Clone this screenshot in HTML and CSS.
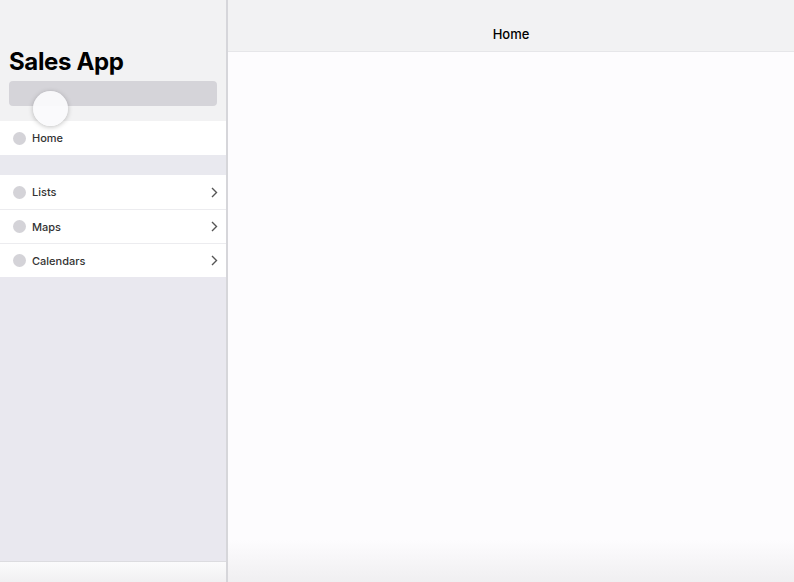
FILE: index.html
```html
<!DOCTYPE html>
<html lang="en">
<head>
  <meta charset="UTF-8">
  <meta name="viewport" content="width=device-width, initial-scale=1.0">
  <title>Sales App</title>
  <link rel="stylesheet" href="styles.css">
</head>
<body>
  <aside class="sidebar">
    <div class="side-head">
      <h1>Sales App</h1>
      <div class="search"></div>
      <div class="touch"></div>
    </div>

    <div class="row"><span class="dot"></span><span class="label">Home</span></div>

    <div class="spacer"></div>

    <div class="group">
      <div class="row"><span class="dot"></span><span class="label">Lists</span>
        <svg class="chev" width="7" height="11" viewBox="0 0 7 11"><path d="M1 1l4.5 4.5L1 10" fill="none" stroke="#555" stroke-width="1.4"/></svg></div>
      <div class="row"><span class="dot"></span><span class="label">Maps</span>
        <svg class="chev" width="7" height="11" viewBox="0 0 7 11"><path d="M1 1l4.5 4.5L1 10" fill="none" stroke="#555" stroke-width="1.4"/></svg></div>
      <div class="row"><span class="dot"></span><span class="label">Calendars</span>
        <svg class="chev" width="7" height="11" viewBox="0 0 7 11"><path d="M1 1l4.5 4.5L1 10" fill="none" stroke="#555" stroke-width="1.4"/></svg></div>
    </div>

    <div class="fill"></div>
    <div class="side-foot"></div>
  </aside>

  <main class="main">
    <header class="main-head">Home</header>
    <div class="main-body"></div>
    <div class="main-foot"></div>
  </main>
</body>
</html>
```

FILE: styles.css
```css
* {
  box-sizing: border-box;
}

body {
  margin: 0;
  height: 582px;
  display: flex;
  font-family: Inter, "Liberation Sans", sans-serif;
  color: #333;
  overflow: hidden;
}

/* Barra lateral */
.sidebar {
  width: 228px;
  display: flex;
  flex-direction: column;
  background-color: #e9e8ef;
  border-right: 2px solid #d6d6da;
}

.side-head {
  position: relative;
  background-color: #f2f2f3;
  padding: 48px 9px 15px;
}

.side-head h1 {
  margin: 0;
  font-size: 24px;
  line-height: 27px;
  font-weight: 700;
  color: #000;
  letter-spacing: -0.35px;
}

.search {
  margin-top: 6px;
  height: 25px;
  border-radius: 4px;
  background-color: #d5d4d9;
}

.touch {
  position: absolute;
  left: 33px;
  top: 91px;
  width: 35px;
  height: 35px;
  border-radius: 50%;
  background-color: rgba(250, 250, 252, 0.95);
  box-shadow: 0 1px 5px rgba(0, 0, 0, 0.25);
}

.row {
  height: 34px;
  display: flex;
  align-items: center;
  padding: 0 8px 0 13px;
  background-color: #fff;
  font-size: 11px;
  font-weight: 500;
}

.group .row + .row {
  border-top: 1px solid #ececef;
}

.dot {
  width: 13px;
  height: 13px;
  border-radius: 50%;
  background-color: #d4d3d8;
  margin-right: 6px;
}

.label {
  flex: 1;
}

.chev {
  display: block;
}

.spacer {
  height: 20px;
  background-color: #e9e9ef;
}

.fill {
  flex: 1;
}

.side-foot {
  height: 21px;
  border-top: 1px solid #dcdce0;
  background: linear-gradient(#fbfbfc, #f1f0f2);
}

/* Area principal */
.main {
  flex: 1;
  display: flex;
  flex-direction: column;
  background-color: #fdfcfe;
}

.main-head {
  height: 52px;
  padding-top: 26px;
  text-align: center;
  font-size: 13px;
  line-height: 16px;
  font-weight: 500;
  color: #000;
  background-color: #f2f2f3;
  border-bottom: 1px solid #e6e6e9;
}

.main-body {
  flex: 1;
}

.main-foot {
  height: 42px;
  background: linear-gradient(#fdfcfe, #f0eff1);
}
```
